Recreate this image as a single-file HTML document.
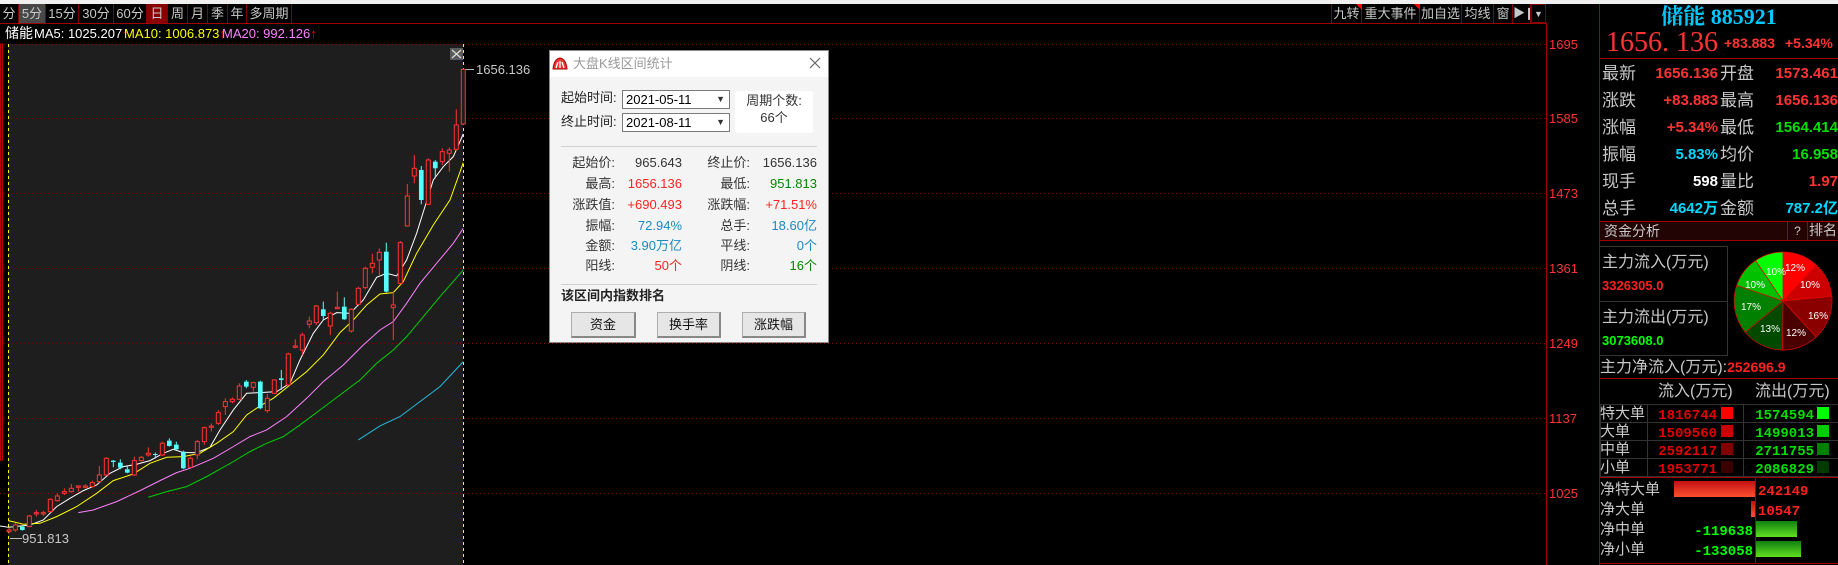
<!DOCTYPE html>
<html><head><meta charset="utf-8">
<style>
*{margin:0;padding:0;box-sizing:border-box}
body{width:1838px;height:565px;background:#000;position:relative;overflow:hidden;font-family:"Liberation Sans","Noto Sans CJK SC",sans-serif;}
.a{position:absolute;white-space:nowrap}
.tab{position:absolute;top:4px;height:19px;color:#c8c8c8;font-size:13px;line-height:19px;text-align:center;border-right:1px solid #800000;white-space:nowrap;overflow:hidden}
.lbl{position:absolute;color:#c8c8c8;font-size:17px;line-height:20px;white-space:nowrap}
.v{position:absolute;font-size:15px;font-weight:bold;line-height:20px;text-align:right}
.dl{position:absolute;font-size:13px;color:#333;text-align:right;line-height:16px}
.btn{position:absolute;top:312px;height:26px;background:#e6e6e6;border:1px solid #adadad;border-bottom:2px solid #888;border-right:2px solid #888;font-size:13px;line-height:24px;text-align:center;color:#111}
</style></head><body>
<div class="a" style="left:0;top:0;width:1838px;height:4px;background:#f0f0f0"></div>
<div class="a" style="left:0;top:23px;width:1546px;height:1px;background:#a00000"></div>
<div class="tab" style="left:0;width:19px">分</div>
<div class="tab" style="left:19px;width:27px;background:#484848">5分</div>
<div class="tab" style="left:46px;width:33px">15分</div>
<div class="tab" style="left:79px;width:35px">30分</div>
<div class="tab" style="left:114px;width:33px">60分</div>
<div class="tab" style="left:147px;width:21px;background:#8a0000">日</div>
<div class="tab" style="left:168px;width:20px">周</div>
<div class="tab" style="left:188px;width:20px">月</div>
<div class="tab" style="left:208px;width:20px">季</div>
<div class="tab" style="left:228px;width:19px">年</div>
<div class="tab" style="left:247px;width:45px">多周期</div>
<div class="tab" style="left:1331px;width:31px;border-left:1px solid #800000">九转</div>
<div class="a" style="left:1356px;top:4px;width:0;height:0;border-top:6px solid #f00;border-left:6px solid transparent"></div>
<div class="tab" style="left:1362px;width:58px">重大事件</div>
<div class="a" style="left:1414px;top:4px;width:0;height:0;border-top:6px solid #f00;border-left:6px solid transparent"></div>
<div class="tab" style="left:1420px;width:42px">加自选</div>
<div class="tab" style="left:1462px;width:32px">均线</div>
<div class="tab" style="left:1494px;width:19px">窗</div>
<div class="tab" style="left:1513px;width:18px;font-size:12px">&#9654;&#10074;</div>
<div class="tab" style="left:1531px;width:15px;border:1px solid #800000;font-size:9px">&#9660;</div>
<div class="a" style="left:5px;top:24px;font-size:14px;line-height:18px;color:#fff">储能</div>
<div class="a" style="left:34px;top:25px;font-size:13px;line-height:17px;color:#fff">MA5: 1025.207<span style="color:#f00">↑</span></div>
<div class="a" style="left:124px;top:25px;font-size:13px;line-height:17px;color:#ff0">MA10: 1006.873<span style="color:#f00">↑</span></div>
<div class="a" style="left:222px;top:25px;font-size:13px;line-height:17px;color:#ff80ff">MA20: 992.126<span style="color:#f00">↑</span></div>
<div class="a" style="left:8px;top:44px;width:455px;height:521px;background:#1e1e1e"></div>
<svg class="a" style="left:0;top:0" width="1599" height="565">
<g stroke="#8a0000" stroke-dasharray="1,3" stroke-width="1">
<line x1="0" y1="44.5" x2="1546" y2="44.5"/><line x1="0" y1="118.5" x2="1546" y2="118.5"/><line x1="0" y1="193.5" x2="1546" y2="193.5"/><line x1="0" y1="268.5" x2="1546" y2="268.5"/><line x1="0" y1="343.5" x2="1546" y2="343.5"/><line x1="0" y1="418.5" x2="1546" y2="418.5"/><line x1="0" y1="493.5" x2="1546" y2="493.5"/>
</g>
<line x1="1546.5" y1="23" x2="1546.5" y2="565" stroke="#a00000"/>
<rect x="0.5" y="44" width="2" height="416" fill="none" stroke="#c00000"/>
<line x1="8.5" y1="44" x2="8.5" y2="565" stroke="#ff0" stroke-dasharray="3,3"/>
<line x1="463.5" y1="44" x2="463.5" y2="565" stroke="#ff0" stroke-dasharray="3,3"/>
<g fill="#ff3333" font-size="13" font-family="Liberation Sans">
<text x="1549" y="49">1695</text><text x="1549" y="123">1585</text><text x="1549" y="198">1473</text><text x="1549" y="273">1361</text><text x="1549" y="348">1249</text><text x="1549" y="423">1137</text><text x="1549" y="498">1025</text>
</g>
<rect x="450" y="48" width="13" height="12" fill="#5a5a5a"/>
<path d="M452 50 L461 58 M461 50 L452 58" stroke="#ddd" stroke-width="1.2"/>
<line x1="464" y1="69.5" x2="474" y2="69.5" stroke="#bbb"/>
<text x="476" y="74" fill="#c8c8c8" font-size="13" font-family="Liberation Sans">1656.136</text>
<line x1="10" y1="538.5" x2="22" y2="538.5" stroke="#bbb"/>
<text x="22" y="543" fill="#c8c8c8" font-size="13" font-family="Liberation Sans">951.813</text>
<g transform="translate(0,40) scale(0.3333)">
<g fill="none" stroke-width="3">
<polyline stroke="#fff" points="0,1458 25,1462 90,1455 130,1440 170,1400 210,1375 250,1352 290,1335 330,1300 370,1280 410,1273 450,1262 490,1240 520,1228 550,1238 590,1238 630,1222 660,1170 700,1110 740,1060 780,1058 830,1055 870,1030 900,960 940,880 970,840 1010,818 1050,820 1090,780 1130,712 1160,700 1190,708 1220,660 1250,580 1275,500 1300,420 1330,380 1360,350 1390,282"/>
<polyline stroke="#ff0" points="25,1442 70,1453 120,1450 170,1430 230,1400 290,1360 340,1322 400,1302 450,1270 500,1252 550,1250 600,1240 650,1210 700,1175 740,1125 780,1098 820,1075 870,1035 920,995 970,945 1020,878 1060,840 1100,795 1140,762 1180,758 1210,725 1250,640 1300,555 1350,480 1390,368"/>
<polyline stroke="#ff80ff" points="235,1418 280,1410 350,1385 420,1352 480,1322 530,1298 570,1285 640,1255 700,1220 750,1190 800,1170 860,1130 920,1075 970,1025 1030,975 1090,915 1140,870 1180,845 1220,790 1260,730 1310,670 1360,610 1390,565"/>
<polyline stroke="#00d000" points="445,1372 500,1355 560,1340 620,1310 700,1265 750,1235 800,1210 850,1190 900,1155 960,1110 1020,1065 1080,1020 1130,970 1180,930 1220,890 1270,830 1320,770 1390,690"/>
<polyline stroke="#22bbdd" points="1075,1200 1140,1158 1200,1130 1260,1085 1320,1040 1390,965"/>
</g>
<g id="c"></g>
</g>
</svg>
<script>
var C=[[27,1470,1475,1465,1480,'r'],[46,1455,1470,1450,1475,'r'],[67,1460,1470,1458,1472,'c'],[88,1428,1460,1425,1462,'r'],[109,1418,1422,1410,1430,'r'],[130,1418,1422,1413,1428,'r'],[151,1378,1415,1375,1418,'r'],[172,1368,1382,1360,1385,'r'],[193,1355,1360,1345,1365,'r'],[214,1345,1355,1332,1358,'r'],[235,1338,1342,1336,1355,'r'],[256,1338,1342,1333,1345,'r'],[277,1328,1340,1322,1342,'r'],[298,1305,1325,1278,1328,'r'],[319,1255,1305,1252,1307,'r'],[340,1262,1266,1260,1282,'c'],[361,1268,1283,1258,1288,'c'],[382,1288,1298,1278,1300,'c'],[403,1262,1305,1250,1308,'r'],[424,1252,1262,1248,1265,'r'],[445,1240,1245,1222,1250,'r'],[466,1242,1245,1238,1256,'c'],[487,1210,1245,1205,1248,'r'],[508,1202,1218,1195,1220,'c'],[529,1214,1228,1205,1230,'c'],[550,1235,1285,1232,1288,'c'],[571,1255,1282,1250,1285,'r'],[592,1205,1245,1200,1258,'r'],[613,1163,1205,1160,1215,'r'],[634,1158,1162,1150,1175,'r'],[655,1118,1150,1110,1155,'r'],[676,1085,1100,1075,1125,'r'],[697,1078,1085,1072,1090,'r'],[718,1038,1078,1030,1080,'r'],[739,1025,1040,1020,1045,'c'],[760,1028,1042,1025,1055,'r'],[781,1025,1105,1022,1108,'c'],[802,1075,1112,1062,1118,'r'],[823,1020,1060,1018,1062,'r'],[844,1015,1020,990,1050,'c'],[865,942,1035,938,1038,'r'],[886,918,922,898,925,'r'],[907,885,930,878,945,'r'],[928,843,853,830,865,'r'],[949,798,848,795,855,'r'],[970,808,828,785,840,'c'],[991,820,858,815,885,'r'],[1012,802,806,755,808,'r'],[1033,800,838,772,840,'c'],[1054,808,873,805,878,'r'],[1075,745,793,740,795,'r'],[1096,685,743,680,748,'r'],[1117,670,682,642,700,'r'],[1138,637,660,625,705,'r'],[1159,635,755,608,758,'c'],[1180,795,803,755,900,'r'],[1201,608,730,603,733,'r'],[1222,468,558,432,560,'r'],[1243,385,408,345,430,'r'],[1264,390,480,378,493,'c'],[1285,360,493,355,495,'r'],[1306,365,385,360,415,'c'],[1327,335,365,325,375,'r'],[1348,330,340,322,395,'r'],[1369,255,328,208,332,'r'],[1390,88,252,85,255,'r']];
var s='';C.forEach(function(k){var col=k[5]=='r'?'#ff3333':'#55ffff';
s+='<line x1="'+k[0]+'" y1="'+k[3]+'" x2="'+k[0]+'" y2="'+k[1]+'" stroke="'+col+'" stroke-width="3"/>';
s+='<line x1="'+k[0]+'" y1="'+k[2]+'" x2="'+k[0]+'" y2="'+k[4]+'" stroke="'+col+'" stroke-width="3"/>';
if(k[5]=='r')s+='<rect x="'+(k[0]-6)+'" y="'+k[1]+'" width="12" height="'+Math.max(3,k[2]-k[1])+'" fill="#1e1e1e" stroke="'+col+'" stroke-width="3"/>';
else s+='<rect x="'+(k[0]-7)+'" y="'+k[1]+'" width="14" height="'+Math.max(3,k[2]-k[1])+'" fill="'+col+'"/>';});
document.getElementById('c').innerHTML=s;
</script>
<div class="a" style="left:549px;top:50px;width:280px;height:293px;background:#f4f4f4;border:1px solid #888"></div>
<div class="a" style="left:550px;top:51px;width:278px;height:26px;background:#fff"></div>
<svg class="a" style="left:552px;top:56px" width="16" height="16"><path d="M1 13 Q2 3 8 2 Q14 3 15 13 Z" fill="#e33" stroke="#a00"/><path d="M4 12 L6 6 M8 12 L8 5 M12 12 L10 6" stroke="#fff" stroke-width="1.3"/></svg>
<div class="a" style="left:573px;top:55px;font-size:13px;color:#999;line-height:17px">大盘K线区间统计</div>
<svg class="a" style="left:808px;top:56px" width="14" height="14"><path d="M2 2 L12 12 M12 2 L2 12" stroke="#666" stroke-width="1.2"/></svg>
<div class="a" style="left:561px;top:90px;font-size:13px;color:#222;line-height:16px">起始时间:</div>
<div class="a" style="left:561px;top:114px;font-size:13px;color:#222;line-height:16px">终止时间:</div>
<div class="a" style="left:622px;top:90px;width:108px;height:19px;background:#fff;border:1px solid #7a7a7a;font-size:13px;line-height:17px;padding-left:3px;color:#000">2021-05-11<span style="position:absolute;right:4px;top:0;font-size:9px;color:#333">&#9660;</span></div>
<div class="a" style="left:622px;top:113px;width:108px;height:19px;background:#fff;border:1px solid #7a7a7a;font-size:13px;line-height:17px;padding-left:3px;color:#000">2021-08-11<span style="position:absolute;right:4px;top:0;font-size:9px;color:#333">&#9660;</span></div>
<div class="a" style="left:735px;top:91px;width:78px;height:42px;background:#fff;border-radius:3px"></div>
<div class="a" style="left:735px;top:93px;width:78px;text-align:center;font-size:13px;color:#333;line-height:16px">周期个数:</div>
<div class="a" style="left:735px;top:110px;width:78px;text-align:center;font-size:13px;color:#333;line-height:16px">66个</div>
<div class="a" style="left:561px;top:146px;width:256px;height:1px;background:#d0d0d0"></div>
<div class="dl" style="left:560px;top:155px;width:55px">起始价:</div><div class="dl" style="left:620px;top:155px;width:62px">965.643</div>
<div class="dl" style="left:690px;top:155px;width:60px">终止价:</div><div class="dl" style="left:755px;top:155px;width:62px">1656.136</div>
<div class="dl" style="left:560px;top:176px;width:55px">最高:</div><div class="dl" style="left:620px;top:176px;width:62px;color:#f22">1656.136</div>
<div class="dl" style="left:690px;top:176px;width:60px">最低:</div><div class="dl" style="left:755px;top:176px;width:62px;color:#080">951.813</div>
<div class="dl" style="left:560px;top:197px;width:55px">涨跌值:</div><div class="dl" style="left:620px;top:197px;width:62px;color:#f22">+690.493</div>
<div class="dl" style="left:690px;top:197px;width:60px">涨跌幅:</div><div class="dl" style="left:755px;top:197px;width:62px;color:#f22">+71.51%</div>
<div class="dl" style="left:560px;top:218px;width:55px">振幅:</div><div class="dl" style="left:620px;top:218px;width:62px;color:#1a8ac0">72.94%</div>
<div class="dl" style="left:690px;top:218px;width:60px">总手:</div><div class="dl" style="left:755px;top:218px;width:62px;color:#1a8ac0">18.60亿</div>
<div class="dl" style="left:560px;top:238px;width:55px">金额:</div><div class="dl" style="left:620px;top:238px;width:62px;color:#1a8ac0">3.90万亿</div>
<div class="dl" style="left:690px;top:238px;width:60px">平线:</div><div class="dl" style="left:755px;top:238px;width:62px;color:#1a8ac0">0个</div>
<div class="dl" style="left:560px;top:258px;width:55px">阳线:</div><div class="dl" style="left:620px;top:258px;width:62px;color:#f22">50个</div>
<div class="dl" style="left:690px;top:258px;width:60px">阴线:</div><div class="dl" style="left:755px;top:258px;width:62px;color:#080">16个</div>
<div class="a" style="left:561px;top:284px;width:256px;height:1px;background:#d0d0d0"></div>
<div class="a" style="left:561px;top:288px;font-size:13px;font-weight:bold;color:#222;line-height:16px">该区间内指数排名</div>
<div class="btn" style="left:571px;width:65px">资金</div>
<div class="btn" style="left:657px;width:64px">换手率</div>
<div class="btn" style="left:742px;width:64px">涨跌幅</div>
<div class="a" style="left:1599px;top:4px;width:1px;height:561px;background:#a00000"></div>
<div class="a" style="left:1600px;top:3px;width:238px;text-align:center;font-family:'Liberation Serif','Noto Serif CJK SC',serif;font-weight:bold;font-size:22px;color:#00c8ff;line-height:28px">储能 885921</div>
<div class="a" style="left:1606px;top:27px;font-family:'Liberation Serif',serif;font-size:28px;color:#ff3333;line-height:32px">1656. 136</div>
<div class="a" style="left:1724px;top:35px;font-size:14px;font-weight:bold;color:#ff3333">+83.883</div>
<div class="a" style="left:1785px;top:35px;font-size:14px;font-weight:bold;color:#ff3333">+5.34%</div>
<div class="a" style="left:1600px;top:58px;width:238px;height:1px;background:#a00000"></div>
<div class="lbl" style="left:1602px;top:64px">最新</div><div class="v" style="left:1640px;top:64px;width:78px;color:#ff3333">1656.136</div><div class="lbl" style="left:1720px;top:64px">开盘</div><div class="v" style="left:1760px;top:64px;width:78px;color:#ff3333">1573.461</div>
<div class="lbl" style="left:1602px;top:91px">涨跌</div><div class="v" style="left:1640px;top:91px;width:78px;color:#ff3333">+83.883</div><div class="lbl" style="left:1720px;top:91px">最高</div><div class="v" style="left:1760px;top:91px;width:78px;color:#ff3333">1656.136</div>
<div class="lbl" style="left:1602px;top:118px">涨幅</div><div class="v" style="left:1640px;top:118px;width:78px;color:#ff3333">+5.34%</div><div class="lbl" style="left:1720px;top:118px">最低</div><div class="v" style="left:1760px;top:118px;width:78px;color:#00e000">1564.414</div>
<div class="lbl" style="left:1602px;top:145px">振幅</div><div class="v" style="left:1640px;top:145px;width:78px;color:#00d8ff">5.83%</div><div class="lbl" style="left:1720px;top:145px">均价</div><div class="v" style="left:1760px;top:145px;width:78px;color:#00e000">16.958</div>
<div class="lbl" style="left:1602px;top:172px">现手</div><div class="v" style="left:1640px;top:172px;width:78px;color:#fff">598</div><div class="lbl" style="left:1720px;top:172px">量比</div><div class="v" style="left:1760px;top:172px;width:78px;color:#ff3333">1.97</div>
<div class="lbl" style="left:1602px;top:199px">总手</div><div class="v" style="left:1640px;top:199px;width:78px;color:#00d8ff">4642万</div><div class="lbl" style="left:1720px;top:199px">金额</div><div class="v" style="left:1760px;top:199px;width:78px;color:#00d8ff">787.2亿</div>
<div class="a" style="left:1600px;top:221px;width:238px;height:20px;background:#220404;border-top:1px solid #a00000;border-bottom:1px solid #a00000"></div>
<div class="a" style="left:1604px;top:222px;font-size:14px;color:#c8c8c8;line-height:18px">资金分析</div>
<div class="a" style="left:1787px;top:221px;width:21px;height:20px;border:1px solid #a00000;text-align:center;font-size:12px;color:#c8c8c8;line-height:18px">?</div>
<div class="a" style="left:1808px;top:221px;width:30px;height:20px;text-align:center;font-size:14px;color:#c8c8c8;line-height:18px">排名</div>
<div class="a" style="left:1600px;top:246px;width:128px;height:110px;border:1px solid #333;border-left:none"></div>
<div class="a" style="left:1600px;top:301px;width:128px;height:1px;background:#333"></div>
<div class="lbl" style="left:1602px;top:253px;font-size:16px">主力流入(万元)</div>
<div class="a" style="left:1602px;top:278px;font-size:13px;font-weight:bold;color:#ff2020">3326305.0</div>
<div class="lbl" style="left:1602px;top:308px;font-size:16px">主力流出(万元)</div>
<div class="a" style="left:1602px;top:333px;font-size:13px;font-weight:bold;color:#00ff00">3073608.0</div>
<svg class="a" style="left:1733px;top:251px" width="100" height="100" font-family="Liberation Sans" font-size="10" fill="#fff">
<g stroke="#e00000" stroke-width="0.7">
<path d="M50 50 L50.0 1.0 A49 49 0 0 1 83.2 14.0 Z" fill="#ff0000"/>
<path d="M50 50 L83.2 14.0 A49 49 0 0 1 98.8 45.4 Z" fill="#cc0000"/>
<path d="M50 50 L98.8 45.4 A49 49 0 0 1 83.2 86.0 Z" fill="#8a0000"/>
<path d="M50 50 L83.2 86.0 A49 49 0 0 1 49.4 99.0 Z" fill="#4a0000"/>
<path d="M50 50 L49.4 99.0 A49 49 0 0 1 12.3 81.3 Z" fill="#004a00"/>
<path d="M50 50 L12.3 81.3 A49 49 0 0 1 3.7 34.4 Z" fill="#008000"/>
<path d="M50 50 L3.7 34.4 A49 49 0 0 1 22.6 9.5 Z" fill="#00c000"/>
<path d="M50 50 L22.6 9.5 A49 49 0 0 1 50.0 1.0 Z" fill="#00ff00"/>
</g>
<text x="52" y="20">12%</text><text x="67" y="37">10%</text><text x="75" y="68">16%</text><text x="53" y="85">12%</text><text x="27" y="81">13%</text><text x="8" y="59">17%</text><text x="12" y="37">10%</text><text x="33" y="24">10%</text>
</svg>
<div class="lbl" style="left:1600px;top:357px;font-size:16px">主力净流入(万元):<span style="color:#ff2020;font-weight:bold;font-size:14px">252696.9</span></div>
<div class="a" style="left:1600px;top:378px;width:238px;height:1px;background:#a00000"></div>
<div class="lbl" style="left:1658px;top:382px;font-size:16px">流入(万元)</div>
<div class="lbl" style="left:1755px;top:382px;font-size:16px">流出(万元)</div>
<svg class="a" style="left:1599px;top:403px" width="239" height="162">
<g stroke="#333" fill="none"><rect x="1.5" y="1.5" width="238" height="72"/><line x1="1" y1="19.5" x2="239" y2="19.5"/><line x1="1" y1="37.5" x2="239" y2="37.5"/><line x1="1" y1="55.5" x2="239" y2="55.5"/><line x1="48.5" y1="1" x2="48.5" y2="74"/><line x1="144.5" y1="1" x2="144.5" y2="74"/></g>
<line x1="1" y1="74.5" x2="239" y2="74.5" stroke="#a00000"/>
<line x1="1" y1="160.5" x2="239" y2="160.5" stroke="#a00000"/>
<line x1="156.5" y1="75" x2="156.5" y2="160" stroke="#333"/>
<rect x="122" y="4" width="12" height="12" fill="#ff0000"/><rect x="122" y="22" width="12" height="12" fill="#cc0000"/><rect x="122" y="40" width="12" height="12" fill="#800000"/><rect x="122" y="58" width="12" height="12" fill="#3a0000"/>
<rect x="218" y="4" width="12" height="12" fill="#00ff00"/><rect x="218" y="22" width="12" height="12" fill="#00cc00"/><rect x="218" y="40" width="12" height="12" fill="#008000"/><rect x="218" y="58" width="12" height="12" fill="#003a00"/>
<defs><linearGradient id="rg" x1="0" y1="0" x2="0" y2="1"><stop offset="0" stop-color="#c01010"/><stop offset="1" stop-color="#ff5030"/></linearGradient><linearGradient id="gg" x1="0" y1="0" x2="0" y2="1"><stop offset="0" stop-color="#108010"/><stop offset="1" stop-color="#60e020"/></linearGradient></defs>
<rect x="75" y="78" width="81" height="16" fill="url(#rg)"/>
<rect x="152" y="98" width="4" height="16" fill="url(#rg)"/>
<rect x="157" y="118" width="41" height="16" fill="url(#gg)"/>
<rect x="157" y="138" width="45" height="16" fill="url(#gg)"/>
<g font-family="Liberation Mono" font-weight="bold" font-size="14">
<text x="118" y="16" fill="#e00000" text-anchor="end">1816744</text><text x="118" y="34" fill="#e00000" text-anchor="end">1509560</text><text x="118" y="52" fill="#e00000" text-anchor="end">2592117</text><text x="118" y="70" fill="#e00000" text-anchor="end">1953771</text>
<text x="215" y="16" fill="#00e000" text-anchor="end">1574594</text><text x="215" y="34" fill="#00e000" text-anchor="end">1499013</text><text x="215" y="52" fill="#00e000" text-anchor="end">2711755</text><text x="215" y="70" fill="#00e000" text-anchor="end">2086829</text>
<text x="159" y="92" fill="#ff2020">242149</text><text x="159" y="112" fill="#ff2020">10547</text>
<text x="154" y="132" fill="#00ff00" text-anchor="end">-119638</text><text x="154" y="152" fill="#00ff00" text-anchor="end">-133058</text>
</g>
</svg>
<div class="lbl" style="left:1600px;top:405px;font-size:15px;line-height:17px">特大单</div>
<div class="lbl" style="left:1600px;top:423px;font-size:15px;line-height:17px">大单</div>
<div class="lbl" style="left:1600px;top:441px;font-size:15px;line-height:17px">中单</div>
<div class="lbl" style="left:1600px;top:459px;font-size:15px;line-height:17px">小单</div>
<div class="lbl" style="left:1600px;top:480px;font-size:15px;line-height:20px">净特大单</div>
<div class="lbl" style="left:1600px;top:500px;font-size:15px;line-height:20px">净大单</div>
<div class="lbl" style="left:1600px;top:520px;font-size:15px;line-height:20px">净中单</div>
<div class="lbl" style="left:1600px;top:540px;font-size:15px;line-height:20px">净小单</div>
</body></html>
